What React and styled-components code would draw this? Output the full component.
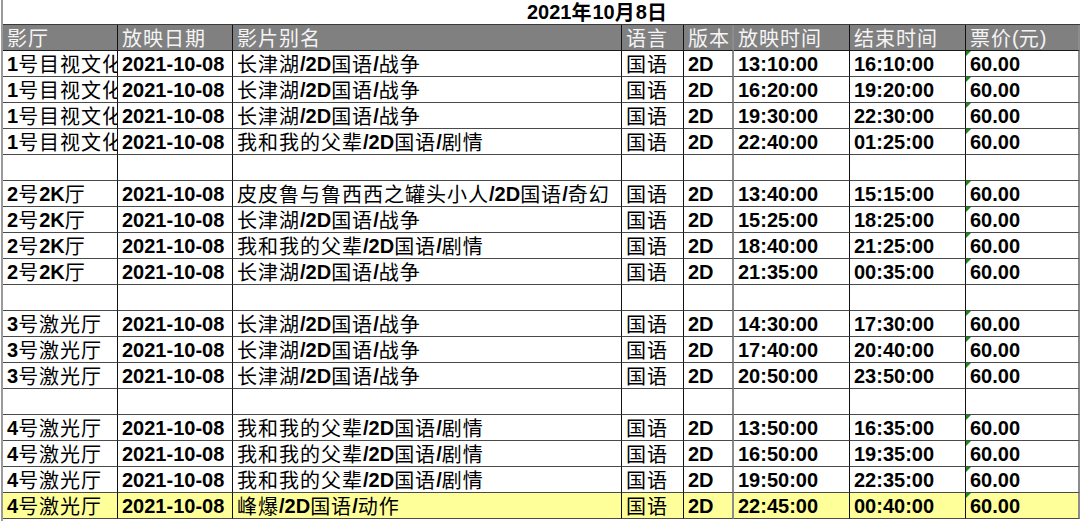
import React from "react";
import styled, { createGlobalStyle } from "styled-components";

const Global = createGlobalStyle`
  html, body { margin: 0; padding: 0; background: #fff; }
  body { width: 1080px; height: 521px; overflow: hidden; }
`;

const Sheet = styled.div`
  margin-left: 1px;
  border-left: 2px solid #9a9a9a;
  width: 1077px;
  height: 521px;
  font-family: "Liberation Sans", Arial, "Noto Sans CJK SC", sans-serif;
  font-size: 20px;
  color: #000;
`;

const Title = styled.div`
  height: 25px;
  box-sizing: border-box;
  padding-left: 524px;
  display: flex;
  align-items: center;
  font-weight: 700;
  border-bottom: 1px solid #3a3a3a;
  line-height: 1;
`;

const Grid = styled.div`
  display: grid;
  grid-template-columns: 115px 115px 389px 62px 50px 116px 116px 1fr;
  grid-auto-rows: 26px;
`;

const Cell = styled.div`
  position: relative;
  box-sizing: border-box;
  display: flex;
  align-items: center;
  padding-left: ${(p) => p.$pad ?? 4}px;
  white-space: nowrap;
  overflow: hidden;
  border-right: ${(p) => (p.$gray ? "2px solid #8c8c8c" : "1px solid #111")};
  border-bottom: 1px solid ${(p) => (p.$head ? "#1a1a1a" : "#4a4a4a")};
  background: ${(p) => (p.$head ? "#808080" : p.$hl ? "#ffff99" : "#fff")};
  color: ${(p) => (p.$head ? "#f4f4f4" : "#000")};
  font-weight: ${(p) => (p.$head ? 400 : 700)};
  line-height: 1;
`;

const Cjk = styled.span`
  font-family: "Noto Sans CJK SC", sans-serif;
  font-weight: ${(p) => (p.$bold ? 700 : 400)};
  letter-spacing: 1px;
`;

const Flag = styled.span`
  position: absolute;
  top: 0;
  left: 0;
  width: 0;
  height: 0;
  border-top: 5px solid #1b8a1b;
  border-right: 5px solid transparent;
`;

const renderText = (s, bold) =>
  s.split(/([\u3000-\u9fff\uff00-\uffef]+)/).map((part, i) =>
    /[\u3000-\u9fff\uff00-\uffef]/.test(part) ? (
      <Cjk key={i} $bold={bold}>
        {part}
      </Cjk>
    ) : (
      <React.Fragment key={i}>{part}</React.Fragment>
    )
  );

const grayCols = [4, 7];

const headers = ["影厅", "放映日期", "影片别名", "语言", "版本", "放映时间", "结束时间", "票价(元)"];

const CJZ = "长津湖/2D国语/战争";
const WFB = "我和我的父辈/2D国语/剧情";

const groups = [
  {
    hall: "1号目视文化厅",
    shows: [
      [CJZ, "13:10:00", "16:10:00"],
      [CJZ, "16:20:00", "19:20:00"],
      [CJZ, "19:30:00", "22:30:00"],
      [WFB, "22:40:00", "01:25:00"],
    ],
  },
  {
    hall: "2号2K厅",
    shows: [
      ["皮皮鲁与鲁西西之罐头小人/2D国语/奇幻", "13:40:00", "15:15:00"],
      [CJZ, "15:25:00", "18:25:00"],
      [WFB, "18:40:00", "21:25:00"],
      [CJZ, "21:35:00", "00:35:00"],
    ],
  },
  {
    hall: "3号激光厅",
    shows: [
      [CJZ, "14:30:00", "17:30:00"],
      [CJZ, "17:40:00", "20:40:00"],
      [CJZ, "20:50:00", "23:50:00"],
    ],
  },
  {
    hall: "4号激光厅",
    shows: [
      [WFB, "13:50:00", "16:35:00"],
      [WFB, "16:50:00", "19:35:00"],
      [WFB, "19:50:00", "22:35:00"],
      ["峰爆/2D国语/动作", "22:45:00", "00:40:00", true],
    ],
  },
];

const rows = [];
groups.forEach((g, gi) => {
  if (gi > 0) rows.push(null);
  g.shows.forEach(([film, start, end, hl]) =>
    rows.push({ cells: [g.hall, "2021-10-08", film, "国语", "2D", start, end, "60.00"], hl })
  );
});

export default function App() {
  return (
    <>
      <Global />
      <Sheet>
        <Title>{renderText("2021年10月8日", true)}</Title>
        <Grid>
          {headers.map((h, i) => (
            <Cell key={"h" + i} $head $gray={grayCols.includes(i)}>
              {renderText(h)}
            </Cell>
          ))}
          {rows.map((r, ri) =>
            r === null
              ? headers.map((_, ci) => <Cell key={`b${ri}-${ci}`} $gray={grayCols.includes(ci)} />)
              : r.cells.map((c, ci) => (
                  <Cell key={`r${ri}-${ci}`} $hl={r.hl} $gray={grayCols.includes(ci)}>
                    {ci === 7 && <Flag />}
                    {renderText(c)}
                  </Cell>
                ))
          )}
        </Grid>
      </Sheet>
    </>
  );
}
